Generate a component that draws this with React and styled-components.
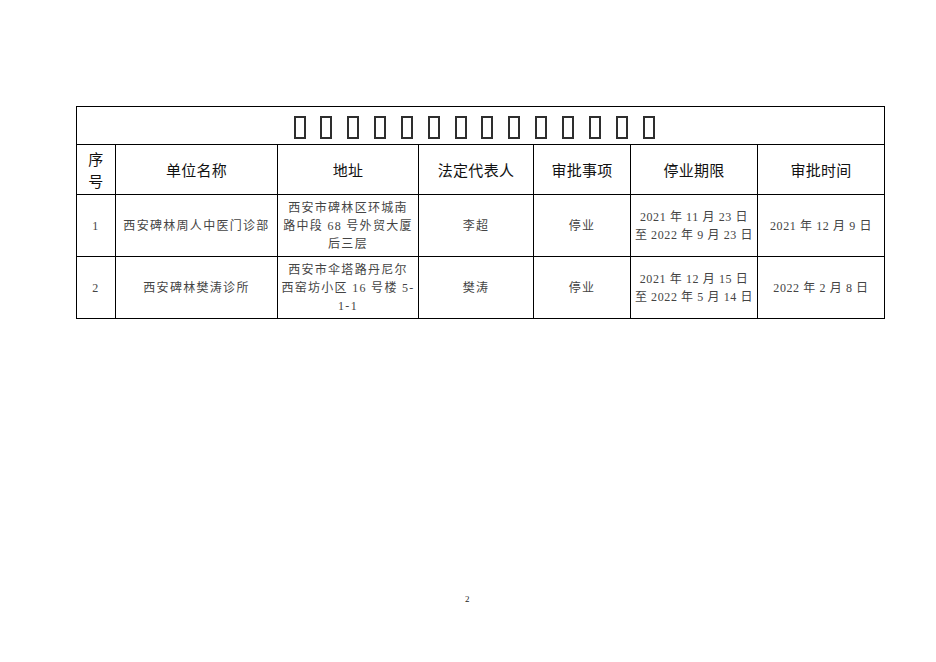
import React from 'react';
import styled, { createGlobalStyle } from 'styled-components';

const GlobalStyle = createGlobalStyle`
    html, body {
        margin: 0;
        padding: 0;
        background: #fff;
    }
`;

const Page = styled.div`
    width: 936px;
    height: 662px;
    box-sizing: border-box;
    padding: 106px 0 0 76px;
    position: relative;
    font-family: 'Liberation Serif', 'Noto Sans CJK SC', serif;
`;

const Table = styled.table`
    width: 808px;
    border-collapse: collapse;
    table-layout: fixed;
`;

const TitleCell = styled.td`
    height: 37px;
    border: 1px solid #000;
    padding: 0;
    text-align: center;
    vertical-align: middle;
`;

const TitleRow = styled.div`
    display: flex;
    justify-content: center;
    gap: 14.85px;
    padding: 3px 13px 0 0;
`;

const Tofu = styled.span`
    display: block;
    width: 8px;
    height: 19px;
    border: 2px solid #2e2e2e;
`;

const HeadCell = styled.th`
    height: 49px;
    border: 1px solid #000;
    padding: 0;
    font-family: 'Noto Sans CJK SC', sans-serif;
    font-weight: 400;
    font-size: 15px;
    line-height: 22px;
    letter-spacing: 0.3px;
    color: #111;
    text-align: center;
    vertical-align: middle;
`;

const Cell = styled.td`
    height: ${p => p.$h || 61}px;
    border: 1px solid #000;
    padding: 0 2px;
    font-size: 12px;
    line-height: 18px;
    letter-spacing: ${p => p.$ls ?? 1.3}px;
    color: #444;
    text-align: center;
    vertical-align: middle;
    word-break: break-all;
`;

const PageNum = styled.div`
    position: absolute;
    left: 465px;
    top: 594px;
    font-family: 'Liberation Serif', serif;
    font-size: 9px;
    color: #222;
`;

const cols = [39, 162, 141, 115, 97, 127, 127];
const headers = ['序\n号', '单位名称', '地址', '法定代表人', '审批事项', '停业期限', '审批时间'];

const rows = [
    {
        no: '1',
        name: '西安碑林周人中医门诊部',
        addr: ['西安市碑林区环城南', '路中段 68 号外贸大厦', '后三层'],
        rep: '李超',
        item: '停业',
        period: ['2021 年 11 月 23 日', '至 2022 年 9 月 23 日'],
        date: '2021 年 12 月 9 日'
    },
    {
        no: '2',
        name: '西安碑林樊涛诊所',
        addr: ['西安市伞塔路丹尼尔', '西窑坊小区 16 号楼 5-', '1-1'],
        rep: '樊涛',
        item: '停业',
        period: ['2021 年 12 月 15 日', '至 2022 年 5 月 14 日'],
        date: '2022 年 2 月 8 日'
    }
];

const Lines = ({ lines }) => lines.map((l, i) => <div key={i}>{l}</div>);

export default function App() {
    return (
        <>
            <GlobalStyle />
            <Page>
                <Table>
                    <colgroup>
                        {cols.map((w, i) => <col key={i} style={{ width: w }} />)}
                    </colgroup>
                    <tbody>
                        <tr>
                            <TitleCell colSpan={7}>
                                <TitleRow>
                                    {Array.from({ length: 14 }).map((_, i) => <Tofu key={i} />)}
                                </TitleRow>
                            </TitleCell>
                        </tr>
                        <tr>
                            {headers.map((h, i) => (
                                <HeadCell key={i}>
                                    <Lines lines={h.split('\n')} />
                                </HeadCell>
                            ))}
                        </tr>
                        {rows.map(r => (
                            <tr key={r.no}>
                                <Cell>{r.no}</Cell>
                                <Cell>{r.name}</Cell>
                                <Cell><Lines lines={r.addr} /></Cell>
                                <Cell>{r.rep}</Cell>
                                <Cell>{r.item}</Cell>
                                <Cell $ls={0.6}><Lines lines={r.period} /></Cell>
                                <Cell $ls={0.6}>{r.date}</Cell>
                            </tr>
                        ))}
                    </tbody>
                </Table>
                <PageNum>2</PageNum>
            </Page>
        </>
    );
}
